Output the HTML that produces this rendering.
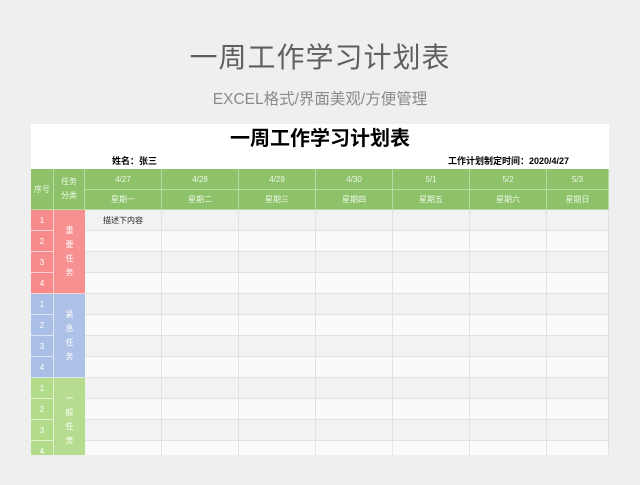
<!DOCTYPE html>
<html><head><meta charset="utf-8"><style>
body{margin:0;width:640px;height:485px;background:#efefef;font-family:"Liberation Sans","Noto Sans CJK SC",sans-serif;position:relative;overflow:hidden}
.a{position:absolute;box-sizing:border-box;display:flex;align-items:center;justify-content:center;text-align:center}
</style></head><body>
<div class="a" style="left:0;width:640px;top:36px;height:40px;font-size:28px;color:#5f5f5f;letter-spacing:1px">一周工作学习计划表</div>
<div class="a" style="left:0;width:640px;top:87px;height:22px;font-size:15.5px;color:#8a8a8a">EXCEL格式/界面美观/方便管理</div>
<div id="s" style="position:absolute;left:31px;top:124px;width:578px;height:331px;background:#fff;overflow:hidden"></div>
<script>
var s=document.getElementById('s'),h='';
function d(x,y,w,hh,bg,txt,st){h+='<div class="a" style="left:'+x+'px;top:'+y+'px;width:'+w+'px;height:'+hh+'px;background:'+bg+';'+(st||'')+'">'+(txt||'')+'</div>';}
d(0,0,578,25,'#fff','一周工作学习计划表','font-size:20px;font-weight:bold;color:#000');
d(81,28,100,16,'transparent','姓名：张三','font-size:9px;font-weight:bold;color:#000;justify-content:flex-start');
d(373,28,165,16,'transparent','工作计划制定时间：2020/4/27','font-size:9px;font-weight:bold;color:#000;justify-content:flex-end');
var G='#8dc26a',L='border-right:1px solid #b8dca0;border-bottom:1px solid #b8dca0;color:#eef7e6;font-size:8px;';
d(0,45,23,41,G,'序号',L);d(23,45,31,41,G,'任务<br>分类',L+'line-height:14px');
var xs=[54,131,208,285,362,439,516,578],dt=['4/27','4/28','4/29','4/30','5/1','5/2','5/3'],wd=['星期一','星期二','星期三','星期四','星期五','星期六','星期日'];
for(var i=0;i<7;i++){d(xs[i],45,xs[i+1]-xs[i],21,G,dt[i],L);d(xs[i],66,xs[i+1]-xs[i],20,G,wd[i],L);}
var cols=['#f78b8b','#a9bfe5','#b3dc8a'],cat=['重<br>要<br>任<br>务','紧<br>急<br>任<br>务','一<br>般<br>任<br>务'];
for(var g=0;g<3;g++){var y0=86+g*84;
 d(23,y0,31,84,cols[g],cat[g],'color:#fff;font-size:8px;line-height:14px;opacity:.95;border-bottom:1px solid rgba(255,255,255,.6)');
 for(var r=0;r<4;r++){var y=y0+r*21;
  d(0,y,23,21,cols[g],String(r+1),'color:#fff;font-size:8px;border-bottom:1px solid rgba(255,255,255,.6);border-right:1px solid rgba(255,255,255,.6)');
  var bg=(r%2==0)?'#f2f2f2':'#fafafa';
  for(var i=0;i<7;i++)d(xs[i],y,xs[i+1]-xs[i],21,bg,(g==0&&r==0&&i==0)?'描述下内容':'','border-right:1px solid #e2e2e2;border-bottom:1px solid #e2e2e2;font-size:8px;color:#222');
 }}
s.innerHTML=h;
</script>
</body></html>
